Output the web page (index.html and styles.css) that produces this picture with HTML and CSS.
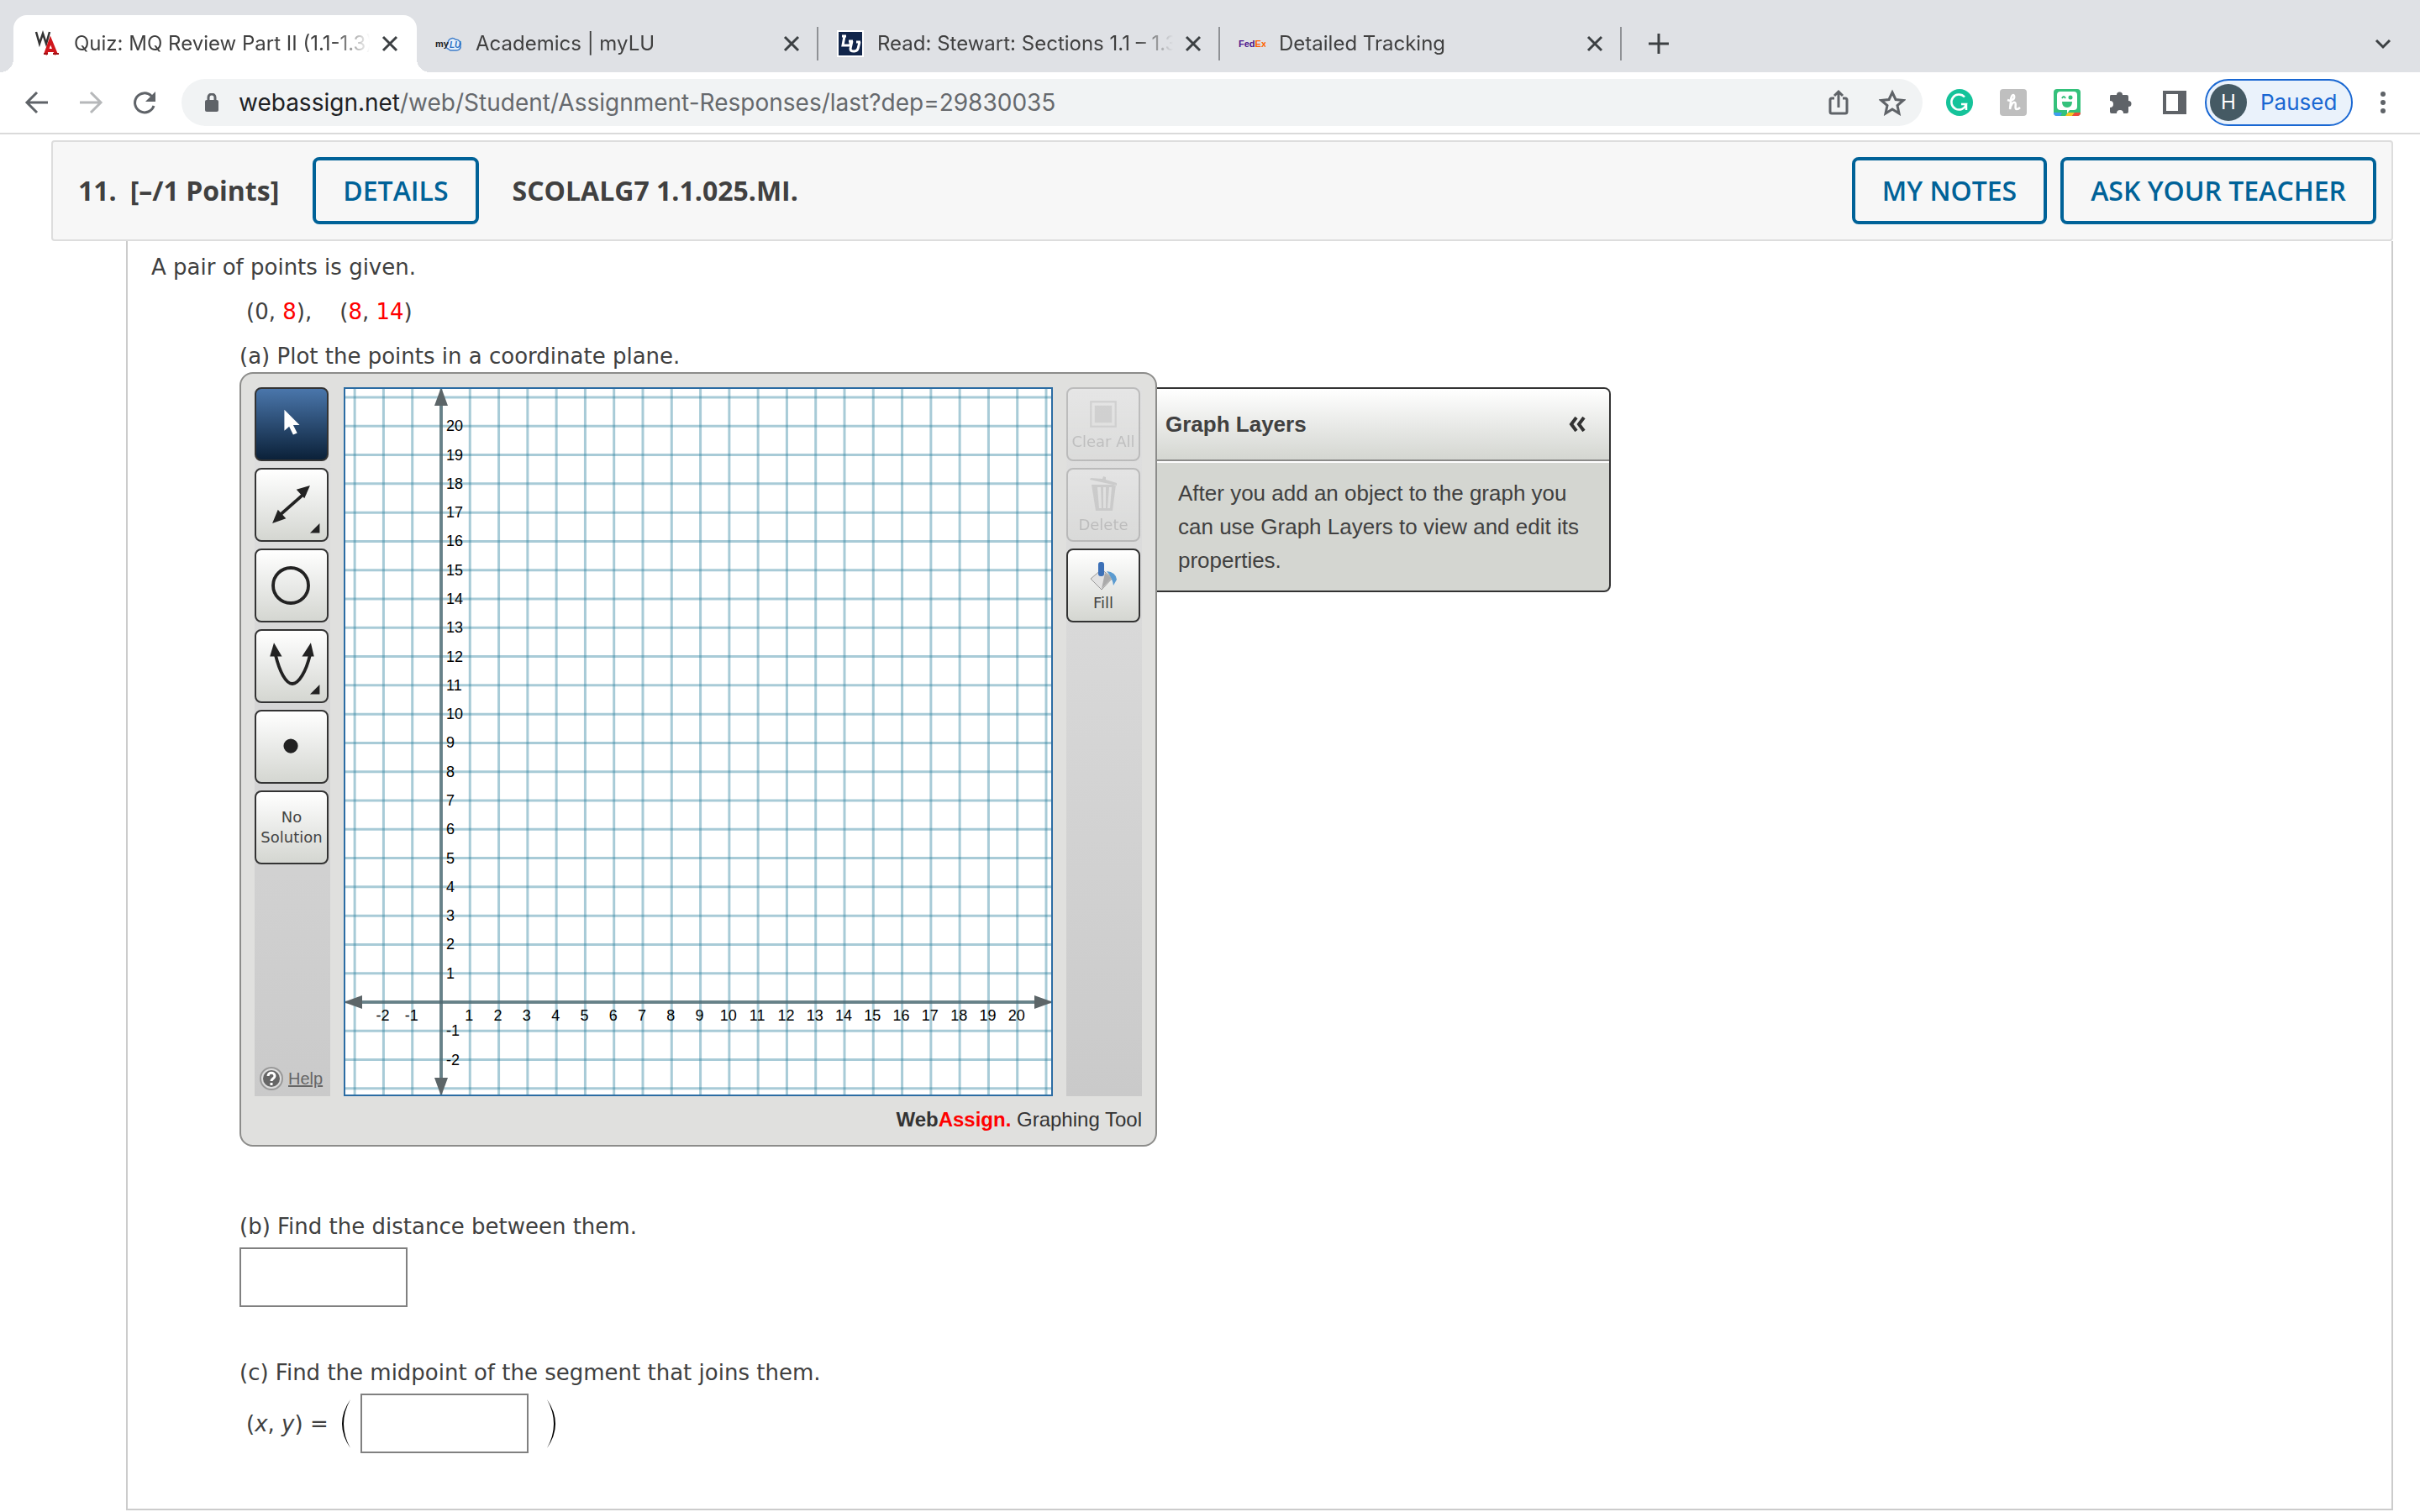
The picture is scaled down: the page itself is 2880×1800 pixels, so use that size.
FILE: index.html
```html
<!DOCTYPE html>
<html lang="en">
<head>
    <meta charset="UTF-8">
    <meta name="viewport" content="width=device-width, initial-scale=1.0">
    <title>Quiz: MQ Review Part II (1.1-1.3)</title>
    <link rel="stylesheet" href="styles.css">
</head>
<body>
<header class="browser">
    <nav class="tabs">
        <div class="tab active">
            <svg class="favicon" viewBox="0 0 32 32"><g fill="none"><path d="M3 2l4 14 4-12 4 12 4-14" stroke="#333" stroke-width="2.500"/><path d="M14 29l6-17 7 17M16 24h10" stroke="#d0161c" stroke-width="4"/><path d="M12 28h5M23 28h7" stroke="#a01015" stroke-width="2"/></g></svg>
            <span class="tab-title">Quiz: MQ Review Part II (1.1-1.3)</span>
            <button class="tab-close" aria-label="Close tab"><svg viewBox="0 0 24 24"><path d="M4 4l16 16M20 4L4 20"/></svg></button>
        </div>
        <div class="tab">
            <svg class="favicon" viewBox="0 0 32 32"><path d="M15 22c-3-1-3-5 0-6 0-6 6-8 9-5 5 0 7 4 6 7 1 4-2 6-5 6h-7z" fill="#e6effa" stroke="#3d7cc9" stroke-width="1.5"/><text x="0" y="20" class="fav-my">my</text><text x="17" y="21" class="fav-lu">LU</text></svg>
            <span class="tab-title">Academics | myLU</span>
            <button class="tab-close" aria-label="Close tab"><svg viewBox="0 0 24 24"><path d="M4 4l16 16M20 4L4 20"/></svg></button>
        </div>
        <div class="tab">
            <svg class="favicon" viewBox="0 0 32 32"><rect width="32" height="32" fill="#fff"/><rect x="2" y="2" width="28" height="28" fill="#12264b"/><path d="M6 7h5M9 7L7 18h9v-4M14 13h5M18 13l-2 9q0 3 4 3t5-3l2-8M23 14h5" fill="none" stroke="#fff" stroke-width="3"/></svg>
            <span class="tab-title">Read: Stewart: Sections 1.1 – 1.3</span>
            <button class="tab-close" aria-label="Close tab"><svg viewBox="0 0 24 24"><path d="M4 4l16 16M20 4L4 20"/></svg></button>
        </div>
        <div class="tab">
            <svg class="favicon" viewBox="0 0 32 32"><text x="0" y="20" class="fav-fed">Fed<tspan class="fav-ex">Ex</tspan></text></svg>
            <span class="tab-title">Detailed Tracking</span>
            <button class="tab-close" aria-label="Close tab"><svg viewBox="0 0 24 24"><path d="M4 4l16 16M20 4L4 20"/></svg></button>
        </div>
        <button class="new-tab" aria-label="New tab"><svg viewBox="0 0 32 32"><path d="M16 4v24M4 16h24"/></svg></button>
        <button class="tab-search" aria-label="Search tabs"><svg viewBox="0 0 32 32"><path d="M8 12l8 8 8-8"/></svg></button>
    </nav>
    <div class="toolbar">
        <div class="nav-buttons">
            <button class="icon-btn" aria-label="Back"><svg viewBox="0 0 32 32"><path class="line" d="M29 16H5M16 4L4 16l12 12"/></svg></button>
            <button class="icon-btn dim" aria-label="Forward"><svg viewBox="0 0 32 32"><path class="line" d="M3 16h24M16 4l12 12-12 12"/></svg></button>
            <button class="icon-btn" aria-label="Reload"><svg viewBox="0 0 32 32"><path class="line" d="M27 20A11.500 11.500 0 1 1 24 8l2 2"/><path d="M29 3v12H17z"/></svg></button>
        </div>
        <div class="address">
            <svg class="lock" viewBox="0 0 16 22"><rect y="8" width="16" height="14" rx="2"/><path class="line" d="M4 9V5a4 4 0 0 1 8 0v4"/></svg>
            <a class="url" href="#">webassign.net<span>/web/Student/Assignment-Responses/last?dep=29830035</span></a>
            <button class="icon-btn" aria-label="Share"><svg viewBox="0 0 32 32"><path class="line" d="M11 11H8q-2 0-2 2v14q0 2 2 2h16q2 0 2-2V13q0-2-2-2h-3M16 22V4M11 8l5-5 5 5"/></svg></button>
            <button class="icon-btn" aria-label="Bookmark"><svg viewBox="0 0 32 32"><path class="line" d="M16 4l4 8.500 9 1-7 6 2 9.500-8-5-8 5 2-9.500-7-6 9-1z"/></svg></button>
        </div>
        <div class="extensions">
            <button class="icon-btn" aria-label="Grammarly"><svg viewBox="0 0 32 32"><circle cx="16" cy="16" r="16" fill="#15c39a"/><path d="M22 9.500A9 9 0 1 0 24 18h-6M24 25v-7" fill="none" stroke="#fff" stroke-width="2.500"/></svg></button>
            <button class="icon-btn" aria-label="Honey"><svg viewBox="0 0 32 32"><rect width="32" height="32" rx="4" fill="#bfbfbf"/><path d="M9 13c5 2 9-1 8-5-2-3-4 2-4 6l-1 10c1-6 4-9 6-8s-1 8 2 8q2 0 4-2" fill="none" stroke="#fff" stroke-width="2.500"/></svg></button>
            <button class="icon-btn" aria-label="Bitmoji"><svg viewBox="0 0 32 32"><rect width="32" height="32" rx="4" fill="#34c17b"/><path d="M0 28h10l-2 4H4q-4 0-4-4z" fill="#3f9cf0"/><path d="M17 28h8l-3 4h-8z" fill="#f9c623"/><path d="M25 28h7q0 4-4 4h-6z" fill="#ee4a3a"/><path d="M8 3h16q4 0 4 4v14q0 4-4 4h-5l-3 4v-4H8q-4 0-4-4V7q0-4 4-4z" fill="#fff"/><path d="M10 15h12q0 7-6 7t-6-7z" fill="#34c17b"/><path d="M10 11q2-4 4 0" fill="none" stroke="#34c17b" stroke-width="2"/><circle cx="20" cy="10" r="2.500" fill="#34c17b"/></svg></button>
            <button class="icon-btn" aria-label="Extensions"><svg viewBox="0 0 32 32"><path d="M4 7h7a3.500 3.500 0 1 1 7 0h5q2 0 2 2v5a3.500 3.500 0 1 1 0 7v6q0 2-2 2h-4a4 4 0 0 0-8 0H5q-2 0-2-2v-5a4 4 0 0 0 0-8V9q0-2 1-2z"/></svg></button>
            <button class="icon-btn" aria-label="Side panel"><svg viewBox="0 0 32 32"><path fill-rule="evenodd" d="M2 2h28v28H2zM6 6v20h14V6z"/></svg></button>
        </div>
        <button class="profile"><span class="avatar">H</span>Paused</button>
        <button class="icon-btn" aria-label="Menu"><svg viewBox="0 0 32 32"><circle cx="16" cy="6" r="3"/><circle cx="16" cy="16" r="3"/><circle cx="16" cy="26" r="3"/></svg></button>
    </div>
</header>

<main class="question">
    <div class="question-header">
        <span class="number">11.</span>
        <span class="points">[–/1 Points]</span>
        <button class="btn">DETAILS</button>
        <span class="code">SCOLALG7 1.1.025.MI.</span>
        <button class="btn notes">MY NOTES</button>
        <button class="btn">ASK YOUR TEACHER</button>
    </div>

    <div class="question-body">
        <p>A pair of points is given.</p>
        <div class="parts">
            <p class="math">(0, <span class="red">8</span>),&nbsp;&nbsp;&nbsp; (<span class="red">8</span>, <span class="red">14</span>)</p>
            <p>(a) Plot the points in a coordinate plane.</p>

            <div class="graph-row">
                <div class="graph-tool">
                    <div class="graph-main">
                        <div class="tool-column">
                            <button class="tool selected" aria-label="Select"><svg viewBox="0 0 88 88"><path d="M35 26v26l6-5 5 10 5-2-5-10h8z" fill="#fff"/></svg></button>
                            <button class="tool" aria-label="Line"><svg viewBox="0 0 88 88"><path d="M28 58l33-29" stroke="#222" stroke-width="4"/><path d="M67 20l-7 16-10-11zM20 67l7-17 10 11zM79 67v12H67z"/></svg></button>
                            <button class="tool" aria-label="Circle"><svg viewBox="0 0 88 88"><circle cx="43" cy="44" r="22" fill="none" stroke="#222" stroke-width="4"/></svg></button>
                            <button class="tool" aria-label="Parabola"><svg viewBox="0 0 88 88"><path d="M24 30c5 21 13 36 21 36s17-15 22-36" fill="none" stroke="#222" stroke-width="4"/><path d="M22 15l10 17H17zM68 15l4 17H57zM79 67v12H67z"/></svg></button>
                            <button class="tool" aria-label="Point"><svg viewBox="0 0 88 88"><circle cx="43" cy="43" r="9"/></svg></button>
                            <button class="tool">No<br>Solution</button>
                            <a class="help" href="#"><svg viewBox="0 0 28 28"><circle cx="14" cy="14" r="13" fill="#ddd" stroke="#999" stroke-width="2"/><circle cx="14" cy="14" r="10" fill="#666"/><path d="M10 11c0-5 8-5 8 0 0 3-4 3-4 6M14 19v3" fill="none" stroke="#fff" stroke-width="3"/></svg><span>Help</span></a>
                        </div>
                        <svg class="graph" id="graph" viewBox="0 0 840 840"></svg>
                        <div class="tool-column">
                            <button class="tool" disabled><svg class="small" viewBox="0 0 30 30"><rect x="2" y="2" width="26" height="26" fill="none" stroke="#999" stroke-width="2"/><rect x="6" y="6" width="18" height="18" fill="#999"/></svg>Clear All</button>
                            <button class="tool" disabled><svg class="tall" viewBox="0 0 36 44"><path d="M3 4L17 5l1-3 3 1v3l13 4v3L2 6zM4 12h29l-4 31H9zM11 15l2 25h3l-1-25zM18 15v25h3V15zM25 15l-2 25h3l2-25z" fill="#888" fill-rule="evenodd"/></svg>Delete</button>
                            <button class="tool"><svg class="small" viewBox="0 0 34 34"><path d="M15 10L28 20 15 34 2 21z" fill="#e2e2e2" stroke="#999"/><path d="M15 33l12-13-8-6z" fill="#aaa"/><path d="M21 12q11 1 12 10l-4 7q-1-9-8-17z" fill="#5b9bd0"/><rect x="11" y="1" width="7" height="17" rx="3" fill="#3c70b7"/></svg>Fill</button>
                        </div>
                    </div>
                    <div class="brand"><b>Web<span class="red">Assign.</span></b> Graphing Tool</div>
                </div>
                <aside class="layers">
                    <h2>Graph Layers <button class="collapse" aria-label="Collapse"><svg viewBox="0 0 20 18"><path d="M9 1L3 9l6 8M18 1l-6 8 6 8"/></svg></button></h2>
                    <p>After you add an object to the graph you can use Graph Layers to view and edit its properties.</p>
                </aside>
            </div>

            <div class="part">
                <label for="distance">(b) Find the distance between them.</label>
                <input type="text" id="distance">
            </div>
            <div class="part part-c">
                <label for="midpoint">(c) Find the midpoint of the segment that joins them.</label>
                <div class="equation">
                    <span class="math">(<i>x</i>, <i>y</i>) =</span>
                    <svg class="paren" viewBox="0 0 14 60"><path d="M12 1Q-8 30 12 59Q-4 30 12 1z"/></svg>
                    <input type="text" id="midpoint">
                    <svg class="paren right" viewBox="0 0 14 60"><path d="M2 1Q22 30 2 59Q18 30 2 1z"/></svg>
                </div>
            </div>
        </div>
    </div>
</main>
<script src="script.js"></script>
</body>
</html>
```

FILE: styles.css
```css
* {
    box-sizing: border-box;
}
body {
    margin: 0;
    background-color: white;
    color: #404040;
    font-family: Verdana, "DejaVu Sans", sans-serif;
    font-size: 26px;
    line-height: 32px;
}
button {
    padding: 0;
    border: none;
    background: none;
    color: inherit;
    font: inherit;
    cursor: pointer;
}
svg {
    display: block;
}
p {
    margin: 0;
}
.red {
    color: #ff0000;
}

/* Browser tabs */
.browser {
    font-family: Inter, sans-serif;
    border-bottom: 2px solid #dadada;
}
.tabs {
    display: flex;
    height: 86px;
    padding: 18px 28px 0 16px;
    background-color: #dfe1e5;
}
.tab {
    display: flex;
    align-items: center;
    width: 478px;
    height: 40px;
    margin-top: 14px;
    padding: 0 18px 0 22px;
    border-right: 2px solid #8f9195;
    font-size: 24px;
}
.tab.active {
    position: relative;
    width: 480px;
    height: 68px;
    margin-top: 0;
    padding: 0 20px 0 24px;
    border-right: none;
    border-radius: 16px 16px 0 0;
    background-color: white;
}
/* Curved feet of the active tab */
.tab.active::before, .tab.active::after {
    content: "";
    position: absolute;
    bottom: 0;
    width: 16px;
    height: 16px;
}
.tab.active::before {
    left: -16px;
    background: radial-gradient(circle at 0 0, transparent 16px, white 16px);
}
.tab.active::after {
    right: -16px;
    background: radial-gradient(circle at 100% 0, transparent 16px, white 16px);
}
.favicon {
    width: 32px;
    height: 32px;
    flex: none;
}
.fav-my, .fav-lu {
    font: bold 11px "Liberation Sans", sans-serif;
    fill: #222;
}
.fav-lu {
    font-size: 10px;
    font-style: italic;
    fill: #2a6fc4;
}
.fav-fed {
    font: bold 11px "Liberation Sans", sans-serif;
    fill: #4d148c;
}
.fav-ex {
    fill: #ff6200;
}
.tab-title {
    flex: 1;
    min-width: 0;
    margin: 0 12px 0 16px;
    overflow: hidden;
    white-space: nowrap;
    -webkit-mask-image: linear-gradient(to right, black 88%, transparent);
    mask-image: linear-gradient(to right, black 88%, transparent);
}
.tab-close svg {
    width: 24px;
    height: 24px;
}
.new-tab svg, .tab-search svg {
    width: 32px;
    height: 32px;
}
.tab-close svg, .new-tab svg, .tab-search svg {
    fill: none;
    stroke: #3c4043;
    stroke-width: 3;
}
.new-tab {
    margin-left: 28px;
}
.tab-search {
    margin-left: auto;
}

/* Toolbar */
.toolbar {
    display: flex;
    align-items: center;
    height: 72px;
    padding: 0 28px;
}
.icon-btn {
    flex: none;
    width: 32px;
    height: 32px;
    fill: #5f6368;
}
.dim {
    opacity: 0.45;
}
.line {
    fill: none;
    stroke: #5f6368;
    stroke-width: 3;
}
.nav-buttons, .extensions {
    display: flex;
    gap: 32px;
}
.address {
    display: flex;
    align-items: center;
    flex: 1;
    gap: 32px;
    height: 56px;
    margin: 0 28px;
    padding: 0 20px 0 28px;
    border-radius: 28px;
    background-color: #f1f3f4;
}
.lock {
    width: 16px;
    height: 22px;
    margin-right: -8px;
    fill: #5f6368;
}
.url {
    flex: 1;
    color: #202124;
    font-size: 28px;
    text-decoration: none;
}
.url span {
    color: #66696d;
}
.profile {
    display: flex;
    align-items: center;
    width: 176px;
    height: 56px;
    margin: 0 20px;
    padding-left: 4px;
    gap: 16px;
    border: 2px solid #1967d2;
    border-radius: 28px;
    background-color: #eaf2fb;
    color: #1967d2;
}
.avatar {
    width: 44px;
    line-height: 44px;
    border-radius: 50%;
    background-color: #455a64;
    color: white;
    font-size: 24px;
}

/* Question */
.question {
    margin: 7px 32px 0 61px;
}
.question-header {
    display: flex;
    align-items: center;
    height: 120px;
    padding: 0 18px 0 30px;
    border: 2px solid #ddd;
    border-radius: 4px;
    background-color: #f7f7f7;
    font-family: "Open Sans", sans-serif;
    font-size: 32px;
    font-weight: bold;
}
.points {
    margin: 0 40px 0 16px;
}
.code {
    margin-left: 40px;
}
.btn {
    height: 80px;
    padding: 0 32px;
    border: 4px solid #006298;
    border-radius: 8px;
    color: #006298;
    font-weight: 600;
}
.btn.notes {
    margin: 0 16px 0 auto;
}
.question-body {
    margin-left: 89px;
    padding: 15px 0 66px 28px;
    border: 2px solid #ccc;
    border-top: none;
}
.parts {
    margin-left: 105px;
}
.parts > p {
    margin-top: 21px;
}
.math {
    padding-left: 8px;
}

/* Graphing tool */
.graph-row {
    display: flex;
    align-items: flex-start;
    margin-top: 3px;
    font-family: "Liberation Sans", Arial, sans-serif;
}
.graph-tool {
    padding: 16px 16px 14px;
    border: 2px solid #8c8c8a;
    border-radius: 16px;
    background-color: #e0e0de;
}
.graph-main {
    display: flex;
    gap: 16px;
}
.tool-column {
    display: flex;
    flex-direction: column;
    gap: 8px;
    width: 90px;
    background: linear-gradient(#e0e0e0, #cacaca);
}
.tool {
    display: flex;
    flex-direction: column;
    align-items: center;
    justify-content: center;
    width: 88px;
    height: 88px;
    border: 2px solid #333;
    border-radius: 8px;
    background: linear-gradient(white, #d4d6d1);
    color: #444;
    fill: #222;
    font-family: "DejaVu Sans", sans-serif;
    font-size: 18px;
    line-height: 24px;
}
.tool svg {
    width: 88px;
    height: 88px;
}
.tool svg.small {
    width: 34px;
    height: 34px;
    margin: 4px 0;
}
.tool svg.tall {
    width: 36px;
    height: 44px;
    margin-bottom: 4px;
}
.tool.selected {
    background: linear-gradient(#4a76ab, #0b2139);
}
.tool:disabled {
    opacity: 0.2;
}
.help {
    display: flex;
    align-items: center;
    gap: 6px;
    margin: auto 0 5px 6px;
    color: #666;
    font-size: 20px;
}
.help svg {
    width: 28px;
    height: 28px;
}
.graph {
    width: 844px;
    height: 844px;
    border: 2px solid #2b6ca3;
    background-color: white;
    font-size: 18px;
}
.grid-line {
    stroke: #267d9c;
    stroke-opacity: 0.4;
    stroke-width: 3;
}
.axis {
    stroke: #50686f;
    stroke-opacity: 0.75;
    stroke-width: 4;
}
.arrow {
    fill: #5c6568;
}
.brand {
    padding-top: 12px;
    text-align: right;
    color: #333;
    font-size: 24px;
}
.layers {
    width: 540px;
    margin-top: 18px;
    border: 2px solid #333;
    border-left: none;
    border-radius: 0 8px 8px 0;
    background-color: #d4d6d1;
    overflow: hidden;
}
.layers h2 {
    display: flex;
    align-items: center;
    justify-content: space-between;
    height: 86px;
    margin: 0 0 2px;
    padding: 0 28px 0 10px;
    border-bottom: 2px solid #8c8c8a;
    box-shadow: 0 2px white;
    background: linear-gradient(white, #d4d6d1);
    font-size: 26px;
}
.collapse svg {
    width: 20px;
    height: 18px;
    fill: none;
    stroke: #333;
    stroke-width: 4;
}
.layers p {
    padding: 16px 24px 16px 25px;
    line-height: 40px;
}

/* Answers */
.part {
    margin-top: 79px;
}
.part-c {
    margin-top: 62px;
}
.part label {
    display: block;
    margin-bottom: 9px;
}
.part input {
    display: block;
    width: 200px;
    height: 71px;
    border: 2px solid #808080;
    background-color: white;
    font: inherit;
}
.equation {
    display: flex;
    align-items: center;
    gap: 10px;
}
.equation .math {
    padding-right: 4px;
}
.paren {
    width: 14px;
    height: 60px;
}
.paren.right {
    margin-left: 10px;
}
```

FILE: script.js
```js
// Draws the coordinate plane: grid, axes, arrowheads and labels
const graph = document.getElementById('graph');
const STEP = 840 / 24.5;
const ORIGIN_X = 114;
const ORIGIN_Y = 730;

function add(name, attrs, text) {
    const el = document.createElementNS('http://www.w3.org/2000/svg', name);
    for (const key in attrs) el.setAttribute(key, attrs[key]);
    if (text !== undefined) el.textContent = text;
    graph.appendChild(el);
}

for (let i = -3; i <= 21; i++) {
    const x = ORIGIN_X + i * STEP;
    const y = ORIGIN_Y - i * STEP;
    add('line', { x1: x, x2: x, y1: 0, y2: 840, class: 'grid-line' });
    add('line', { x1: 0, x2: 840, y1: y, y2: y, class: 'grid-line' });
}

add('line', { x1: ORIGIN_X, x2: ORIGIN_X, y1: 6, y2: 834, class: 'axis' });
add('line', { x1: 6, x2: 834, y1: ORIGIN_Y, y2: ORIGIN_Y, class: 'axis' });
add('path', { class: 'arrow', d: 'M114 -2l8 22h-16z M114 842l8-22h-16z M-2 730l22-8v16z M842 730l-22-8v16z' });

for (let i = -2; i <= 20; i++) {
    if (i === 0) continue;
    add('text', { x: ORIGIN_X + i * STEP - 1, y: ORIGIN_Y + 22, 'text-anchor': 'middle' }, i);
    add('text', { x: ORIGIN_X + 6, y: ORIGIN_Y - i * STEP + 6 }, i);
}
```
